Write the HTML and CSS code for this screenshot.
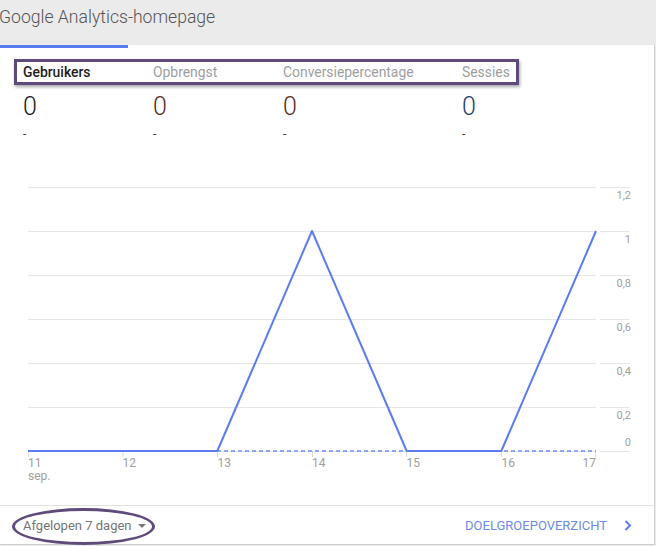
FILE: index.html
```html
<!DOCTYPE html>
<html lang="nl">
<head>
<meta charset="utf-8">
<title>Google Analytics-homepage</title>
<link rel="stylesheet" href="styles.css">
</head>
<body>
<header class="page-head">
  <h1 class="page-title">Google Analytics-homepage</h1>
</header>
<section class="card">
  <div class="tab-indicator"></div>
  <div class="metrics">
    <div class="metric-tabs">
      <span class="tab active">Gebruikers</span>
      <span class="tab">Opbrengst</span>
      <span class="tab">Conversiepercentage</span>
      <span class="tab">Sessies</span>
    </div>
    <div class="metric-values">
      <span class="value v1">0</span>
      <span class="value v2">0</span>
      <span class="value v3">0</span>
      <span class="value v4">0</span>
    </div>
    <div class="metric-deltas">
      <span class="delta">-</span>
      <span class="delta">-</span>
      <span class="delta">-</span>
      <span class="delta">-</span>
    </div>
  </div>
  <svg class="chart" width="654" height="355" viewBox="0 0 654 355" xmlns="http://www.w3.org/2000/svg">
    <g class="grid" stroke="#e6e6e6" stroke-width="1">
      <line x1="28" y1="37.5" x2="596" y2="37.5"/>
      <line x1="28" y1="81.5" x2="596" y2="81.5"/>
      <line x1="28" y1="125.5" x2="596" y2="125.5"/>
      <line x1="28" y1="169.5" x2="596" y2="169.5"/>
      <line x1="28" y1="213.5" x2="596" y2="213.5"/>
      <line x1="28" y1="257.5" x2="596" y2="257.5"/>
      <line x1="28" y1="301.5" x2="596" y2="301.5"/>
      <line x1="600" y1="37.5" x2="630" y2="37.5"/>
      <line x1="600" y1="81.5" x2="630" y2="81.5"/>
      <line x1="600" y1="125.5" x2="630" y2="125.5"/>
      <line x1="600" y1="169.5" x2="630" y2="169.5"/>
      <line x1="600" y1="213.5" x2="630" y2="213.5"/>
      <line x1="600" y1="257.5" x2="630" y2="257.5"/>
      <line x1="600" y1="301.5" x2="630" y2="301.5"/>
    </g>
    <g class="ticks" stroke="#dddddd" stroke-width="1">
      <line x1="28.5" y1="301" x2="28.5" y2="307"/>
      <line x1="123" y1="301" x2="123" y2="307"/>
      <line x1="217.5" y1="301" x2="217.5" y2="307"/>
      <line x1="312.5" y1="301" x2="312.5" y2="307"/>
      <line x1="406.5" y1="301" x2="406.5" y2="307"/>
      <line x1="501.5" y1="301" x2="501.5" y2="307"/>
      <line x1="595.5" y1="301" x2="595.5" y2="307"/>
    </g>
    <g class="ylabels" text-anchor="end">
      <text x="631" y="49">1,2</text>
      <text x="631" y="93">1</text>
      <text x="631" y="137">0,8</text>
      <text x="631" y="181">0,6</text>
      <text x="631" y="225">0,4</text>
      <text x="631" y="269">0,2</text>
      <text x="631" y="296">0</text>
    </g>
    <line x1="217" y1="301" x2="596" y2="301" stroke="#8fa4f2" stroke-width="2" stroke-dasharray="4 3"/>
    <polyline fill="none" stroke="#5b7cf0" stroke-width="2" stroke-linejoin="round"
      points="28,301 122.67,301 217.33,301 312,81 406.67,301 501.33,301 596,81"/>
    <g class="xlabels">
      <text x="28" y="317">11</text>
      <text x="28" y="330">sep.</text>
      <text x="122.5" y="317">12</text>
      <text x="217.5" y="317">13</text>
      <text x="312" y="317">14</text>
      <text x="406.5" y="317">15</text>
      <text x="501.5" y="317">16</text>
      <text x="596" y="317" text-anchor="end">17</text>
    </g>
  </svg>
  <footer class="card-foot">
    <button class="range">Afgelopen 7 dagen <span class="caret"></span></button>
    <span class="ring"></span>
    <a class="overview" href="#">DOELGROEPOVERZICHT
      <svg class="chev" width="8" height="11" viewBox="0 0 8 11"><polyline points="1.5,1 6,5.5 1.5,10" fill="none" stroke="#5b7cf0" stroke-width="2"/></svg>
    </a>
  </footer>
</section>
</body>
</html>
```

FILE: styles.css
```css
* { box-sizing: border-box; }
html, body {
  margin: 0;
  padding: 0;
  background: #ffffff;
  font-family: Roboto, "Liberation Sans", Arial, sans-serif;
}
body { width: 656px; height: 546px; overflow: hidden; }

.page-head {
  height: 45px;
  background: #ebebeb;
  padding: 6px 0 0 0;
}
.page-title {
  margin: 0 0 0 -1px;
  font-size: 17.6px;
  line-height: 22px;
  font-weight: 300;
  color: #555555;
}

.card {
  position: relative;
  width: 655px;
  height: 500px;
  background: #ffffff;
  border-right: 1px solid #cfcfcf;
  border-bottom: 1px solid #cfcfcf;
  box-shadow: 1px 1px 2px rgba(0,0,0,0.12);
}
.tab-indicator {
  width: 128px;
  height: 3px;
  background: #5b7cf0;
}

.metrics {
  height: 102px;
  padding-top: 11px;
}
.metric-tabs {
  display: grid;
  grid-template-columns: 130px 130px 179px auto;
  margin-left: 14px;
  width: 505px;
  height: 26px;
  border: 3px solid #5e4b7c;
  padding: 0 0 0 6px;
  box-shadow: 1px 2px 3px rgba(0,0,0,0.35);
}
.tab {
  font-size: 13.9px;
  line-height: 20px;
  color: #9e9e9e;
}
.tab.active {
  color: #212121;
  font-weight: 500;
}
.metric-values, .metric-deltas {
  display: grid;
  grid-template-columns: 130px 130px 179px auto;
  padding-left: 23px;
}
.metric-values { margin-top: 7px; }
.value {
  font-size: 25px;
  line-height: 30px;
  font-weight: 300;
}
.v1 { color: #1a1a1a; }
.v2 { color: #5a2c1e; }
.v3 { color: #5a2c1e; }
.v4 { color: #1e3f6e; }
.metric-deltas { margin-top: 4px; }
.delta {
  font-size: 12px;
  line-height: 16px;
  color: #333333;
}

.chart { display: block; }
.chart text {
  font-family: Roboto, "Liberation Sans", Arial, sans-serif;
}
.ylabels text { font-size: 11px; fill: #a0a0a0; }
.xlabels text { font-size: 12px; fill: #9e9e9e; }

.card-foot {
  position: relative;
  display: flex;
  align-items: center;
  justify-content: space-between;
  height: 39px;
  border-top: 1px solid #e2e2e2;
  padding: 0 22px 0 23px;
}
.range {
  display: flex;
  align-items: center;
  gap: 6px;
  border: 0;
  background: none;
  padding: 0;
  font-family: inherit;
  font-size: 13px;
  color: #757575;
}
.caret {
  width: 0;
  height: 0;
  border-left: 4px solid transparent;
  border-right: 4px solid transparent;
  border-top: 4px solid #777777;
  margin-top: 1px;
}
.ring {
  position: absolute;
  left: 12px;
  top: 2px;
  width: 143px;
  height: 37px;
  border: 3px solid #5e4b7c;
  border-radius: 50%;
}
.overview {
  display: flex;
  align-items: center;
  gap: 17px;
  font-size: 13px;
  color: #6d8ae8;
  text-decoration: none;
}
.chev { display: block; }
```
